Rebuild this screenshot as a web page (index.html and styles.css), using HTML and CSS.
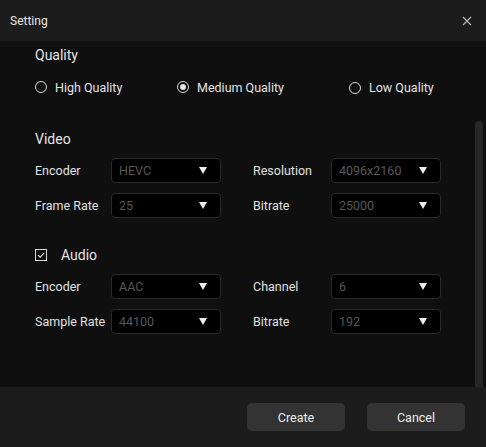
FILE: index.html
```html
<!DOCTYPE html>
<html lang="en">
<head>
  <meta charset="UTF-8">
  <title>Setting</title>
  <link rel="stylesheet" href="styles.css">
</head>
<body>
  <div class="dialog">
    <div class="titlebar">
      <span class="title">Setting</span>
      <svg class="close" width="10" height="10" viewBox="0 0 10 10">
        <path d="M1 1 L9 9 M9 1 L1 9" stroke="#b5b5b5" stroke-width="1.2" fill="none"/>
      </svg>
    </div>

    <div class="content">
      <div class="body">
        <div class="section-title">Quality</div>
        <div class="radios">
          <label class="radio"><span class="dot"></span>High Quality</label>
          <label class="radio"><span class="dot checked"></span>Medium Quality</label>
          <label class="radio low"><span class="dot"></span>Low Quality</label>
        </div>

        <div class="section-title video">Video</div>
        <div class="form">
          <span class="lbl">Encoder</span>
          <div class="select"><span>HEVC</span><svg width="8" height="7" viewBox="0 0 8 7"><path d="M0 0 H8 L4 7 Z" fill="#eee"/></svg></div>
          <span class="lbl">Resolution</span>
          <div class="select"><span>4096x2160</span><svg width="8" height="7" viewBox="0 0 8 7"><path d="M0 0 H8 L4 7 Z" fill="#eee"/></svg></div>
          <span class="lbl">Frame Rate</span>
          <div class="select"><span>25</span><svg width="8" height="7" viewBox="0 0 8 7"><path d="M0 0 H8 L4 7 Z" fill="#eee"/></svg></div>
          <span class="lbl">Bitrate</span>
          <div class="select"><span>25000</span><svg width="8" height="7" viewBox="0 0 8 7"><path d="M0 0 H8 L4 7 Z" fill="#eee"/></svg></div>
        </div>

        <div class="audio-row">
          <span class="check">
            <svg width="10" height="10" viewBox="0 0 10 10"><path d="M2 5.2 L4.2 7.2 L8.2 2.8" stroke="#e6e6e6" stroke-width="1.1" fill="none"/></svg>
          </span>
          <span class="section-title">Audio</span>
        </div>
        <div class="form">
          <span class="lbl">Encoder</span>
          <div class="select"><span>AAC</span><svg width="8" height="7" viewBox="0 0 8 7"><path d="M0 0 H8 L4 7 Z" fill="#eee"/></svg></div>
          <span class="lbl">Channel</span>
          <div class="select"><span>6</span><svg width="8" height="7" viewBox="0 0 8 7"><path d="M0 0 H8 L4 7 Z" fill="#eee"/></svg></div>
          <span class="lbl">Sample Rate</span>
          <div class="select"><span>44100</span><svg width="8" height="7" viewBox="0 0 8 7"><path d="M0 0 H8 L4 7 Z" fill="#eee"/></svg></div>
          <span class="lbl">Bitrate</span>
          <div class="select"><span>192</span><svg width="8" height="7" viewBox="0 0 8 7"><path d="M0 0 H8 L4 7 Z" fill="#eee"/></svg></div>
        </div>
      </div>
      <div class="scrollbar"><div class="thumb"></div></div>
    </div>

    <div class="footer">
      <button type="button">Create</button>
      <button type="button">Cancel</button>
    </div>
  </div>
</body>
</html>
```

FILE: styles.css
```css
body {
  margin: 0;
  background: #0f0f0f;
  font-family: Roboto, 'Liberation Sans', sans-serif;
  color: #e2e2e2;
}
.dialog {
  width: 486px;
  height: 447px;
  display: flex;
  flex-direction: column;
}
.titlebar {
  height: 41px;
  background: #1c1c1c;
  display: flex;
  align-items: center;
  justify-content: space-between;
  padding: 0 14px 0 10px;
  flex-shrink: 0;
}
.title {
  font-size: 12px;
  color: #e8e8e8;
}
.content {
  flex: 1;
  display: flex;
  background: #0f0f0f;
}
.body {
  flex: 1;
  padding: 4px 0 0 35px;
}
.section-title {
  font-size: 14px;
  line-height: 20px;
  height: 20px;
  color: #e4e4e4;
}
.radios {
  display: grid;
  grid-template-columns: 142px 172px auto;
  margin-top: 12px;
  height: 20px;
}
.radio {
  display: flex;
  align-items: center;
  gap: 8px;
  font-size: 12.5px;
}
.radio.low {
  margin-top: 1px;
}
.dot {
  width: 10px;
  height: 10px;
  border: 1px solid #d8d8d8;
  border-radius: 50%;
  display: flex;
  align-items: center;
  justify-content: center;
}
.dot.checked::after {
  content: "";
  width: 6px;
  height: 6px;
  border-radius: 50%;
  background: #e6e6e6;
}
.video {
  margin-top: 32px;
}
.form {
  display: grid;
  grid-template-columns: 76px 142px 78px 110px;
  grid-auto-rows: 25px;
  row-gap: 10px;
  margin-top: 9px;
  align-items: center;
}
.lbl {
  font-size: 12.5px;
  color: #e0e0e0;
}
.select {
  height: 23px;
  background: #000;
  border: 1px solid #2a2a2a;
  border-radius: 4px;
  display: flex;
  align-items: center;
  justify-content: space-between;
  padding: 0 13px 0 7px;
  box-sizing: content-box;
  width: 88px;
  font-size: 12.5px;
  color: #575757;
}
.audio-row {
  display: flex;
  align-items: center;
  gap: 14px;
  margin-top: 27px;
  height: 20px;
}
.check {
  width: 10px;
  height: 10px;
  border: 1px solid #d8d8d8;
  display: flex;
  align-items: center;
  justify-content: center;
}
.scrollbar {
  width: 14px;
  padding-top: 80px;
  display: flex;
  justify-content: center;
  box-sizing: border-box;
}
.thumb {
  width: 8px;
  height: 266px;
  background: #262626;
  border-radius: 4px 4px 0 0;
}
.footer {
  height: 60px;
  background: #1c1c1c;
  display: flex;
  align-items: center;
  justify-content: flex-end;
  gap: 22px;
  padding-right: 21px;
  flex-shrink: 0;
}
button {
  width: 98px;
  height: 28px;
  background: #333;
  color: #eee;
  border: none;
  border-radius: 5px;
  font-family: Roboto, 'Liberation Sans', sans-serif;
  font-size: 12.5px;
}
```
